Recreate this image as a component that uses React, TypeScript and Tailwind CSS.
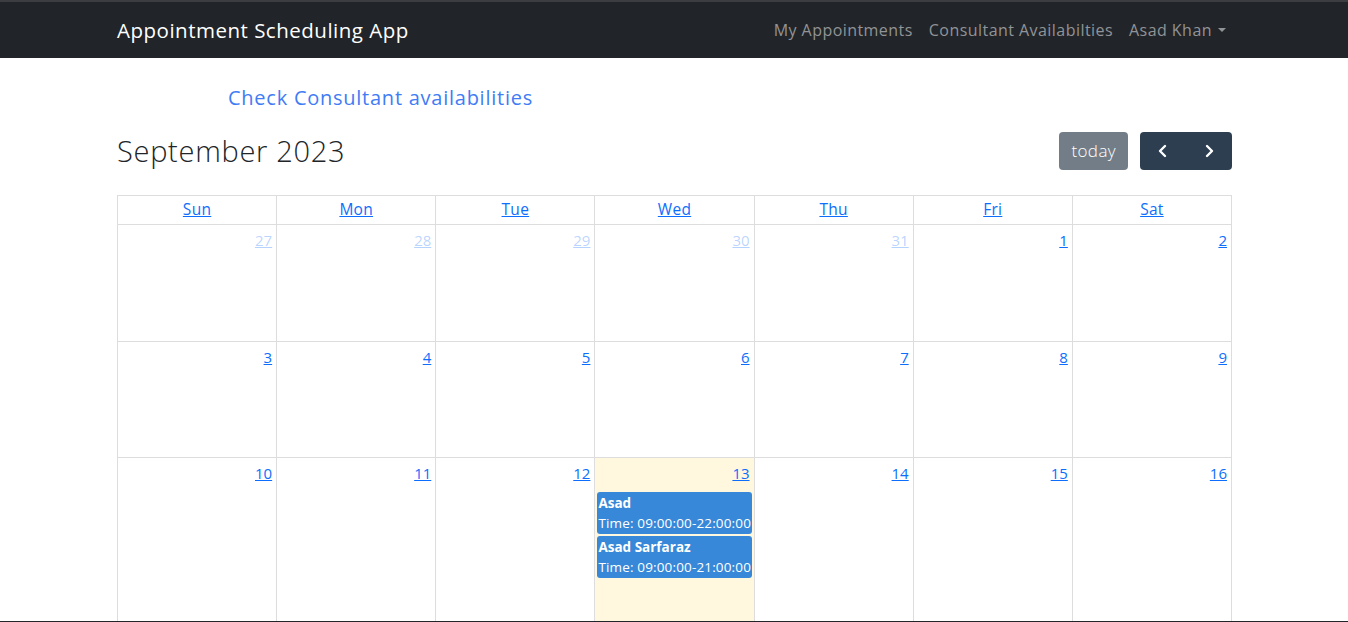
import React from 'react';

const days = ['Sun', 'Mon', 'Tue', 'Wed', 'Thu', 'Fri', 'Sat'];

type Cell = { n: number; other?: boolean; today?: boolean };

// Aug 27 – Oct 7, 2023
const cells: Cell[] = [];
for (let d = 27; d <= 31; d++) cells.push({ n: d, other: true });
for (let d = 1; d <= 30; d++) cells.push({ n: d, today: d === 13 });
for (let d = 1; d <= 7; d++) cells.push({ n: d, other: true });

const events = [
  { name: 'Asad', time: 'Time: 09:00:00-22:00:00' },
  { name: 'Asad Sarfaraz', time: 'Time: 09:00:00-21:00:00' },
];

export default function App() {
  const weeks: Cell[][] = [];
  for (let i = 0; i < cells.length; i += 7) weeks.push(cells.slice(i, i + 7));

  return (
    <div className="min-h-screen bg-white" style={{ fontFamily: '"Open Sans", "Noto Sans", sans-serif' }}>
      {/* Navbar */}
      <nav className="h-[58px] bg-[#212529] border-t-2 border-[#3b3d40]">
        <div className="mx-auto w-[1116px] h-full flex items-center">
          <a className="text-white text-[20.5px] tracking-[0.5px] pl-px">Appointment Scheduling App</a>
          <div className="flex-1" />
          <div className="flex items-center text-[16px] text-[#919396] gap-4 pr-[6px] tracking-[0.45px]">
            <a>My Appointments</a>
            <a>Consultant Availabilties</a>
            <a className="flex items-center gap-[6px]">
              Asad Khan
              <span className="inline-block w-0 h-0 border-l-[4px] border-r-[4px] border-t-[4px] border-l-transparent border-r-transparent border-t-[#919396]" />
            </a>
          </div>
        </div>
      </nav>

      <div className="mx-auto w-[1116px] pl-px">
        <div className="pt-[25px] pl-[111px]">
          <a className="text-[#3f7cf5] text-[20px] tracking-[0.75px]">Check Consultant availabilities</a>
        </div>

        {/* Toolbar */}
        <div className="mt-[18px] flex items-center justify-between h-[40px]">
          <h2 className="text-[29px] font-light text-[#212529] tracking-[0.7px]">September 2023</h2>
          <div className="flex items-center gap-3">
            <button className="h-[38px] px-[12px] rounded bg-[#737d87] text-white text-[17px] font-light tracking-[0.4px]">today</button>
            <div className="flex h-[38px] rounded bg-[#2c3e50] text-white">
              <button className="w-[46px] flex items-center justify-center">
                <svg width="14" height="14" viewBox="0 0 14 14" fill="none" stroke="white" strokeWidth="2.4" strokeLinecap="round" strokeLinejoin="round"><path d="M9 2 L4 7 L9 12" /></svg>
              </button>
              <button className="w-[46px] flex items-center justify-center">
                <svg width="14" height="14" viewBox="0 0 14 14" fill="none" stroke="white" strokeWidth="2.4" strokeLinecap="round" strokeLinejoin="round"><path d="M5 2 L10 7 L5 12" /></svg>
              </button>
            </div>
          </div>
        </div>

        {/* Calendar */}
        <div className="mt-[24px] border-t border-l border-[#dddddd]">
          <div className="grid grid-cols-7">
            {days.map((d) => (
              <div key={d} className="h-[29px] border-r border-b border-[#dddddd] flex items-center justify-center">
                <a className="text-[#0d6efd] underline text-[15.5px] font-medium tracking-[0.3px]">{d}</a>
              </div>
            ))}
          </div>
          {weeks.map((w, wi) => (
            <div key={wi} className="grid grid-cols-7">
              {w.map((c, ci) => (
                <div
                  key={ci}
                  className={`${wi === 2 ? 'h-[175px]' : 'h-[116.5px]'} border-r border-b border-[#dddddd] overflow-hidden ${c.today ? 'bg-[#fff8de]' : ''}`}
                >
                  <div className="flex justify-end pr-[4px] pt-[4px] h-[27px]">
                    <a className={`underline text-[15px] leading-[22px] ${c.other ? 'text-[#0d6efd]/30' : 'text-[#0d6efd]'}`}>{c.n}</a>
                  </div>
                  {c.today && (
                    <div className="flex flex-col gap-[2px] px-[2px] pt-[7px]">
                      {events.map((e) => (
                        <div key={e.name} className="bg-[#3788d8] rounded-[3px] pl-[1px] py-[1px] text-white whitespace-nowrap overflow-hidden">
                          <div className="text-[13.5px] font-bold leading-[20px]">{e.name}</div>
                          <div className="text-[13.5px] leading-[20px] tracking-[0.15px]">{e.time}</div>
                        </div>
                      ))}
                    </div>
                  )}
                </div>
              ))}
            </div>
          ))}
        </div>
      </div>
      <div className="fixed bottom-0 left-0 right-0 h-px bg-[#212529]" />
    </div>
  );
}
